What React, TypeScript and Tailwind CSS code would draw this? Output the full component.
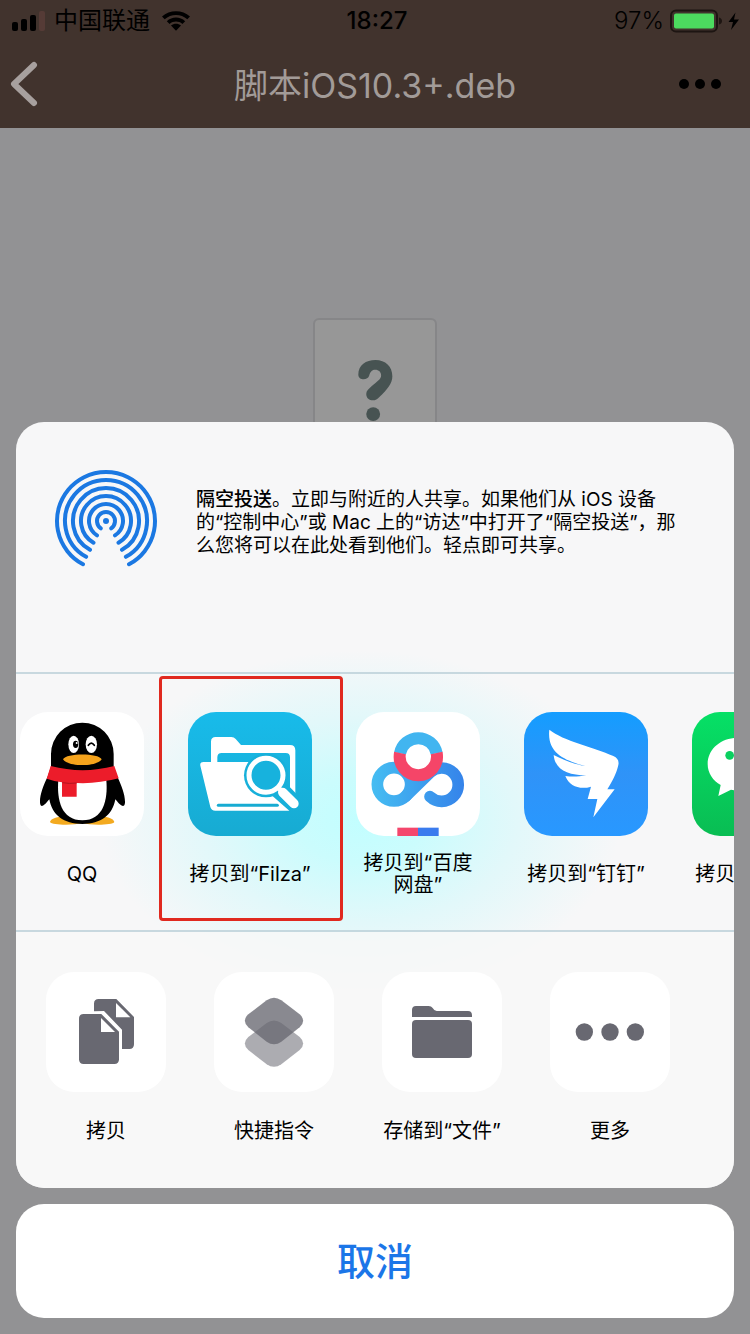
import type { ReactNode } from "react";

const polar = (r: number, deg: number, side: number) => {
  const a = (deg * Math.PI) / 180;
  return `${52 + side * r * Math.sin(a)} ${51 + r * Math.cos(a)}`;
};

const rings: [number, number][] = [
  [49, 28],
  [41, 29],
  [33, 29],
  [25, 30],
  [17, 32],
  [9, 35],
];

function AirDropIcon() {
  return (
    <svg viewBox="0 0 104 104" className="size-[104px] shrink-0" aria-hidden="true">
      <g fill="none" stroke="#1b78e2" strokeWidth="4" strokeLinecap="round">
        {rings.map(([r, deg]) => (
          <path key={r} d={`M${polar(r, deg, -1)} A${r} ${r} 0 1 1 ${polar(r, deg, 1)}`} />
        ))}
      </g>
      <circle cx="52" cy="51" r="3" fill="#1b78e2" />
    </svg>
  );
}

function SignalIcon() {
  return (
    <svg viewBox="0 0 34 22" className="h-[22px] w-[34px]" aria-hidden="true">
      <rect x="0" y="12" width="6" height="9" rx="2" />
      <rect x="9" y="9" width="6" height="12" rx="2" />
      <rect x="18" y="5" width="6" height="16" rx="2" />
      <rect x="27" y="1" width="6" height="20" rx="2" fill="#553b36" />
    </svg>
  );
}

function WifiIcon() {
  return (
    <svg viewBox="0 0 28 20" className="h-5 w-7" aria-hidden="true">
      <path d="M0 5.5C7.500 -1.500 20.500 -1.500 28 5.500L25.300 8.300C19 2.600 9 2.600 2.700 8.300Z" />
      <path d="M4.800 10.200C10 5.400 18 5.400 23.200 10.200L20.400 12.900C16.700 9.700 11.300 9.700 7.600 12.900Z" />
      <path d="M9 14.600C12 12.200 16 12.200 19 14.600L14 19.800Z" />
    </svg>
  );
}

function BatteryIcon() {
  return (
    <svg viewBox="0 0 70 24" className="h-6 w-[70px]" aria-hidden="true">
      <rect x="1" y="1.500" width="46" height="21" rx="5" fill="none" stroke="#1d1512" strokeWidth="2" />
      <rect x="4" y="4.500" width="40" height="15" rx="2" fill="#4cdb5f" />
      <path d="M49 8.500q3 1 3 3.500t-3 3.500z" fill="#1d1512" />
      <path d="M65.500 3.500L58.500 13h4.500l-2 8 8-10.500h-5z" />
    </svg>
  );
}

function QuestionIcon() {
  return (
    <svg viewBox="170 145 112 195" className="h-[65px] w-[37px]" fill="#475352" aria-hidden="true">
      <path d="M174 194C174 165 197 150 226 150C256 150 277 170 277 199C277 222 262 238 237 263C226 278 198 275 198 253C198 244 205 238 214 230C232 214 243 208 243 197C243 187 236 180 225 180C214 180 210 188 207 197C203 213 174 213 174 194Z" />
      <circle cx="219" cy="314" r="21" />
    </svg>
  );
}

function QQIcon() {
  return (
    <svg viewBox="12 126 372 372" className="size-full" aria-hidden="true">
      <rect x="12" y="126" width="372" height="372" fill="#fff" />
      <path d="M102 456C104 446 120 440 145 440H255C278 440 293 446 295 456C290 466 225 466 199 460C170 466 108 466 102 456Z" fill="#f3aa20" />
      <path d="M105 290V252A94 94 0 0 1 293 252V290L304 320C316 345 328 375 327 398C325 412 318 413 298 388C290 435 255 462 199 462C143 462 108 435 100 388C80 413 74 412 72 398C71 375 82 345 95 320Z" />
      <path d="M127 330H271C276 390 262 451 199 451C136 451 122 390 127 330Z" fill="#fff" />
      <ellipse cx="173" cy="223" rx="16" ry="26" fill="#fff" />
      <ellipse cx="226" cy="223" rx="17" ry="26" fill="#fff" />
      <ellipse cx="179" cy="223" rx="8" ry="11" />
      <circle cx="182" cy="219" r="3" fill="#fff" />
      <path d="M217 226Q226 213 235 226" fill="none" stroke="#000" strokeWidth="5" strokeLinecap="round" />
      <path d="M141 268C150 249 248 249 257 268C245 291 153 291 141 268Z" fill="#f5a31c" />
      <path d="M104 288Q200 313 295 288L308 325Q245 342 182 339V380H138V337Q115 334 92 326Z" fill="#ec1c2a" />
      <path d="M139 338Q160 342 182 339" fill="none" stroke="#b3141f" strokeWidth="3" />
    </svg>
  );
}

function FilzaIcon() {
  return (
    <svg viewBox="516 126 372 372" className="size-full" aria-hidden="true">
      <defs>
        <linearGradient id="filza" x1="0" y1="0" x2="0" y2="1">
          <stop offset="0" stopColor="#18bbea" />
          <stop offset="1" stopColor="#17abd2" />
        </linearGradient>
      </defs>
      <rect x="516" y="126" width="372" height="372" fill="url(#filza)" />
      <path d="M585 276V215Q585 201 599 201H646Q654 201 659 207L675 225H822Q838 225 838 241V380H822V262Q822 249 809 249H617Q604 249 604 262V276Z" fill="#fff" />
      <path d="M562 276H760V370L820 422H598Q586 422 583 411L553 287Q551 276 562 276Z" fill="#fff" />
      <path d="M607 406H784" stroke="#17abd2" strokeWidth="9" strokeLinecap="round" />
      <path d="M790 355L832 398" stroke="#17b0da" strokeWidth="50" />
      <circle cx="750" cy="316" r="66" fill="#17b0da" />
      <path d="M784 350L831 397" stroke="#fff" strokeWidth="14" />
      <path d="M800 367L834 401" stroke="#fff" strokeWidth="28" strokeLinecap="round" />
      <circle cx="750" cy="316" r="51" fill="#17b2dd" stroke="#fff" strokeWidth="15" />
    </svg>
  );
}

function BaiduIcon() {
  return (
    <svg viewBox="18 126 372 372" className="size-full" aria-hidden="true">
      <defs>
        <linearGradient id="baidu" gradientUnits="userSpaceOnUse" x1="64" y1="343" x2="344" y2="343">
          <stop offset="0" stopColor="#45bdf2" />
          <stop offset="1" stopColor="#3583ea" />
        </linearGradient>
      </defs>
      <rect x="18" y="126" width="372" height="372" fill="#fff" />
      <g fill="none" stroke="url(#baidu)" strokeWidth="35">
        <circle cx="132" cy="343" r="50" />
        <path d="M240 380A50 50 0 1 0 240 308L167 379" strokeLinecap="round" strokeLinejoin="round" />
      </g>
      <circle cx="205" cy="265" r="45" fill="#fff" />
      <path d="M150 250A56 56 0 0 1 260 250" fill="none" stroke="#41b5f0" strokeWidth="36" />
      <path d="M150 249A56 56 0 1 0 260 249" fill="none" stroke="#f54568" strokeWidth="36" />
      <rect x="142" y="473" width="62" height="25" fill="#f4466c" />
      <rect x="204" y="473" width="62" height="25" fill="#3a7bee" />
    </svg>
  );
}

function DingTalkIcon() {
  return (
    <svg viewBox="522 126 372 372" className="size-full" aria-hidden="true">
      <defs>
        <linearGradient id="ding" x1="0" y1="0" x2="0" y2="1">
          <stop offset="0" stopColor="#149dff" />
          <stop offset="0.500" stopColor="#2f93f8" />
          <stop offset="1" stopColor="#2898ff" />
        </linearGradient>
      </defs>
      <rect x="522" y="126" width="372" height="372" fill="url(#ding)" />
      <path
        d="M598 179C640 213 730 231 790 258Q809 267 805 285C800 310 786 335 772 358H794L730 442L742 387H713L723 350C690 360 658 349 646 318C668 321 685 320 709 316C655 316 615 300 611 255C640 270 680 285 706 288C645 272 590 250 598 179Z"
        fill="#fff"
      />
    </svg>
  );
}

function WeChatIcon() {
  return (
    <svg viewBox="1026 126 372 372" className="size-full" aria-hidden="true">
      <defs>
        <linearGradient id="wechat" x1="0" y1="0" x2="0" y2="1">
          <stop offset="0" stopColor="#06e066" />
          <stop offset="1" stopColor="#09bd53" />
        </linearGradient>
      </defs>
      <rect x="1026" y="126" width="372" height="372" fill="url(#wechat)" />
      <path d="M1165 203C1112 203 1073 237 1073 282C1073 310 1089 332 1112 345L1105 378L1143 359C1230 375 1262 325 1257 282C1257 237 1218 203 1165 203Z" fill="#fff" />
      <circle cx="1139" cy="256" r="13" fill="#0ad060" />
      <circle cx="1195" cy="256" r="13" fill="#0ad060" />
      <ellipse cx="1270" cy="340" rx="78" ry="66" fill="#fff" />
    </svg>
  );
}

function CopyIcon() {
  return (
    <svg viewBox="90 126 360 360" className="size-full" fill="#686871" aria-hidden="true">
      <path d="M234 244V221Q234 207 248 207H301L354 261V343Q354 357 340 357H318V299L264 243Z" />
      <path d="M300 219V262H343Z" fill="#fff" />
      <path d="M203 252H256L309 305V388Q309 402 295 402H203Q189 402 189 388V266Q189 252 203 252Z" />
      <path d="M255 264V306H297Z" fill="#fff" />
    </svg>
  );
}

function ShortcutsIcon() {
  const d = "M752 211Q774 196 796 211L851 253Q872 272 851 292L796 335Q774 350 752 335L697 292Q676 272 697 253Z";
  return (
    <svg viewBox="594 126 360 360" className="size-full" fill="#686871" aria-hidden="true">
      <path d={d} transform="translate(0 68)" opacity="0.55" />
      <path d={d} opacity="0.78" />
    </svg>
  );
}

function FolderIcon() {
  return (
    <svg viewBox="18 126 360 360" className="size-full" fill="#686871" aria-hidden="true">
      <path d="M108 261V240Q108 228 120 228H158Q166 228 170 234Q175 243 182 243H276Q288 243 288 256V261Z" />
      <rect x="108" y="270" width="180" height="114" rx="12" />
    </svg>
  );
}

function MoreIcon() {
  return (
    <svg viewBox="522 126 360 360" className="size-full" fill="#686871" aria-hidden="true">
      <circle cx="625" cy="306" r="26" />
      <circle cx="702" cy="306" r="26" />
      <circle cx="778" cy="306" r="26" />
    </svg>
  );
}

type Item = { id: string; label: ReactNode; icon: ReactNode; marked?: boolean };

const apps: Item[] = [
  { id: "qq", label: "QQ", icon: <QQIcon /> },
  { id: "filza", label: "拷贝到“Filza”", icon: <FilzaIcon />, marked: true },
  { id: "baidu", label: <>拷贝到“百度<br />网盘”</>, icon: <BaiduIcon /> },
  { id: "dingtalk", label: "拷贝到“钉钉”", icon: <DingTalkIcon /> },
  { id: "wechat", label: "拷贝到“微信”", icon: <WeChatIcon /> },
];

const actions: Item[] = [
  { id: "copy", label: "拷贝", icon: <CopyIcon /> },
  { id: "shortcuts", label: "快捷指令", icon: <ShortcutsIcon /> },
  { id: "files", label: "存储到“文件”", icon: <FolderIcon /> },
  { id: "more", label: "更多", icon: <MoreIcon /> },
];

export default function App() {
  return (
    <div className="relative flex min-h-screen flex-col overflow-hidden bg-[#929294] font-['Inter','Noto_Sans_CJK_SC',sans-serif] text-black">
      <header className="bg-[#41332d]">
        <div className="grid h-10 grid-cols-[1fr_auto_1fr] items-center pt-0.5 pr-2.5 pl-3 text-2xl">
          <div className="flex items-center gap-2">
            <SignalIcon />
            <span>中国联通</span>
            <span className="pl-1">
              <WifiIcon />
            </span>
          </div>
          <time className="pl-0.5 font-medium">18:27</time>
          <div className="flex items-center justify-end gap-1.5">
            <span className="font-light">97%</span>
            <BatteryIcon />
          </div>
        </div>
        <div className="grid h-[88px] grid-cols-[1fr_auto_1fr] items-center px-2.5">
          <button type="button" aria-label="返回" className="justify-self-start">
            <svg viewBox="0 0 28 46" className="h-[46px] w-7" aria-hidden="true">
              <path d="M24 4L4 23L24 42" fill="none" stroke="#a7a09e" strokeWidth="6" strokeLinecap="round" strokeLinejoin="round" />
            </svg>
          </button>
          <h1 className="pt-1 text-[34px] leading-10 text-[#a29b98]">脚本iOS10.3+.deb</h1>
          <button type="button" aria-label="更多选项" className="justify-self-end pr-[18px]">
            <svg viewBox="0 0 46 12" className="h-3 w-[46px]" aria-hidden="true">
              <circle cx="8" cy="6" r="5" />
              <circle cx="24" cy="6" r="5" />
              <circle cx="40" cy="6" r="5" />
            </svg>
          </button>
        </div>
      </header>

      <main className="flex justify-center pt-[190px]">
        <div className="flex h-40 w-[124px] justify-center rounded-md border-2 border-[#868688] bg-[#979797] pt-[38px]">
          <QuestionIcon />
        </div>
      </main>

      <div className="absolute inset-x-4 bottom-4 flex flex-col gap-4">
        <div
          role="dialog"
          aria-label="共享"
          className="overflow-hidden rounded-[28px] bg-[#f7f7f8] bg-[radial-gradient(ellipse_260px_170px_at_48%_52%,#c2feff_0%,#cbfcfd_25%,#e2f8fa_60%,#f7f7f8_100%)]"
        >
          <section className="flex h-[250px] items-start gap-[38px] pt-12 pl-[38px]">
            <AirDropIcon />
            <p className="pt-[18px] text-[19px] leading-[23px] whitespace-nowrap">
              <strong className="font-medium">隔空投送</strong>。立即与附近的人共享。如果他们从 iOS 设备
              <br />
              的“控制中心”或 Mac 上的“访达”中打开了“隔空投送”，那
              <br />
              么您将可以在此处看到他们。轻点即可共享。
            </p>
          </section>

          <ul className="flex h-[260px] gap-11 overflow-hidden border-y-2 border-[#bccfd8]/80 pt-[38px] pl-1">
            {apps.map((app) => (
              <li key={app.id} className="relative w-[124px] shrink-0">
                <button type="button" className="flex w-full flex-col items-center gap-4">
                  <span className="size-[124px] overflow-hidden rounded-[28px]">{app.icon}</span>
                  <span className="flex h-11 items-center text-xl leading-[22px] whitespace-nowrap">
                    <span>{app.label}</span>
                  </span>
                </button>
                {app.marked && (
                  <span className="pointer-events-none absolute -top-9 -right-[31px] -left-[29px] h-[245px] rounded-[4px] border-3 border-[#e0291f]" />
                )}
              </li>
            ))}
          </ul>

          <ul className="flex h-64 gap-12 bg-[#f7f7f8]/80 pt-10 pl-[30px]">
            {actions.map((action) => (
              <li key={action.id} className="w-[120px] shrink-0">
                <button type="button" className="flex w-full flex-col items-center gap-7">
                  <span className="size-[120px] overflow-hidden rounded-[28px] bg-white">{action.icon}</span>
                  <span className="text-xl leading-[22px] whitespace-nowrap">{action.label}</span>
                </button>
              </li>
            ))}
          </ul>
        </div>

        <button type="button" className="h-[114px] rounded-[28px] bg-white text-[38px] font-medium text-[#1b76e8]">
          取消
        </button>
      </div>
    </div>
  );
}
